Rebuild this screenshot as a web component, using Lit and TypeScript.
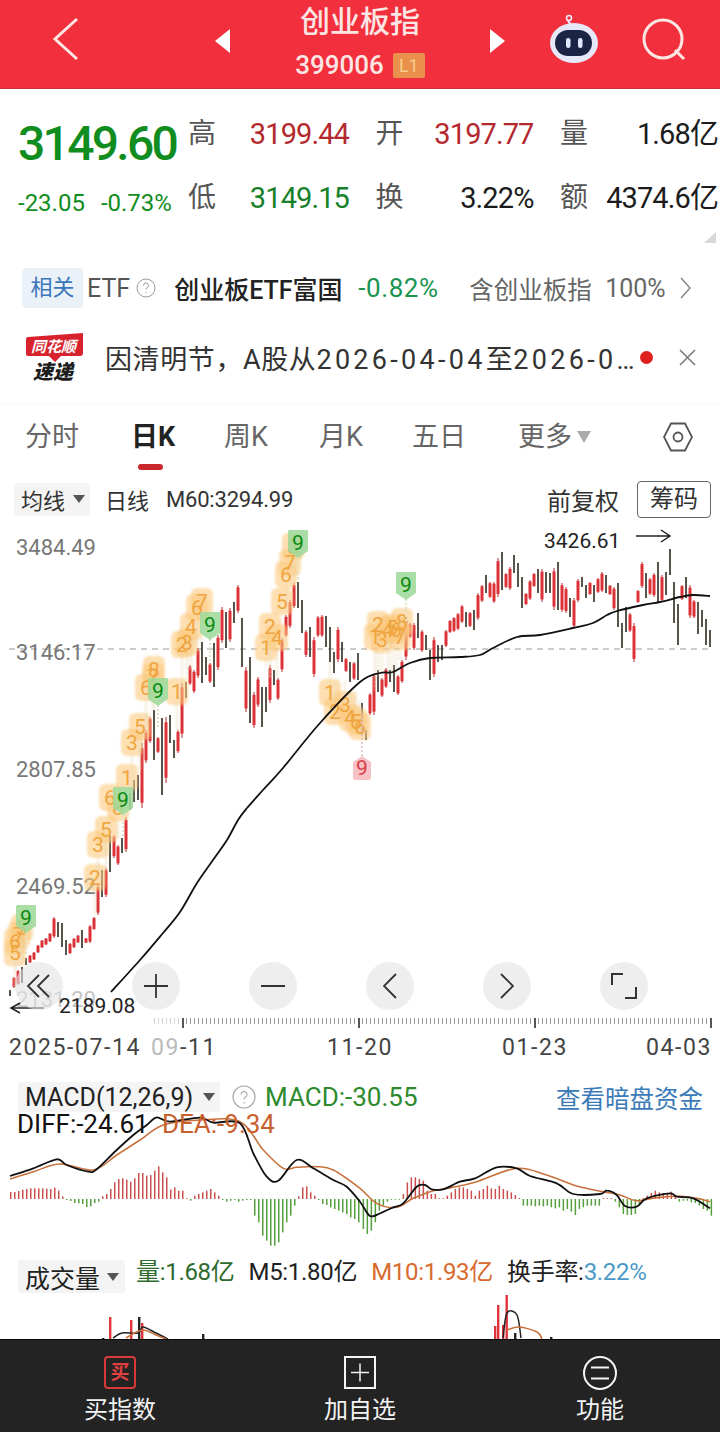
import { LitElement, css, html, svg } from 'lit';
import { customElement } from 'lit/decorators.js';

type Candle = [number, number, 0 | 1];

// top / bottom in page y, one candle every 4px starting at x=10. 1 = red, 0 = dark
const CANDLES: Candle[] = [
  [990,996,0],[977,988,1],[970,985,1],[967,983,0],[958,965,0],[955,963,1],[952,960,1],[945,953,1],[940,948,1],[938,945,1],
  [933,942,1],[917,938,1],[922,937,0],[923,947,0],[940,955,0],[943,954,1],[938,948,1],[935,943,1],[930,948,0],[938,943,1],
  [925,943,1],[917,930,1],[885,915,1],[870,897,0],[868,897,1],[835,872,0],[835,858,1],[845,865,1],[838,853,0],[817,852,1],
  [793,810,0],[780,802,0],[775,800,0],[743,808,1],[730,763,1],[717,743,1],[710,760,0],[737,753,1],[718,795,0],[717,783,1],
  [715,743,0],[740,758,0],[730,753,1],[683,738,1],[682,698,0],[665,685,1],[670,693,1],[648,678,1],[642,683,0],[657,675,0],
  [663,683,1],[643,687,0],[635,670,1],[607,643,1],[612,648,0],[608,642,1],[602,623,0],[585,613,1],[618,667,0],[667,712,1],
  [657,723,0],[692,728,1],[677,707,1],[687,727,0],[687,712,0],[665,703,1],[670,685,0],[678,700,1],[638,672,1],[615,637,1],
  [600,628,1],[583,608,1],[582,608,0],[600,633,0],[630,657,1],[627,657,0],[637,677,1],[616,637,1],[615,637,1],[616,647,0],
  [627,662,0],[652,673,0],[627,662,1],[642,662,0],[658,672,1],[662,682,0],[662,680,1],[653,680,0],[703,735,0],[730,740,0],
  [693,715,1],[673,715,1],[670,692,0],[678,697,1],[668,688,1],[670,682,0],[665,692,0],[675,695,1],[660,683,1],[617,660,1],
  [623,638,1],[623,650,1],[613,638,0],[630,652,1],[635,650,0],[650,680,0],[637,677,1],[645,662,0],[645,660,0],[630,647,1],
  [620,633,1],[617,632,1],[613,630,1],[605,623,1],[612,627,0],[612,627,1],[610,630,0],[593,620,1],[585,602,1],[575,593,0],
  [582,598,1],[582,603,1],[558,597,1],[552,590,0],[573,588,1],[567,590,1],[555,573,0],[563,587,0],[577,608,0],[593,605,1],
  [580,600,1],[573,587,1],[569,593,0],[569,602,1],[572,593,0],[573,593,0],[568,610,1],[562,610,0],[583,612,1],[587,613,1],
  [598,617,0],[598,628,1],[579,602,1],[577,587,0],[585,598,0],[582,595,1],[585,602,0],[578,593,1],[572,592,1],[575,593,0],
  [585,595,1],[587,610,1],[583,627,0],[623,648,0],[607,632,0],[613,632,1],[623,662,1],[590,603,1],[562,588,1],[573,598,0],
  [578,595,1],[573,597,1],[562,602,0],[575,602,1],[572,595,0],[549,575,0],[582,623,0],[604,645,0],[585,600,1],[577,598,0],
  [585,618,1],[600,618,1],[602,634,0],[610,627,0],[619,645,0],[630,647,0],
];

const MA60 = [[111,992],[140,960],[163,933],[180,912],[197,883],[213,860],[227,840],[238,820],[247,808],[263,790],[283,768],[320,723],[360,682],[380,673],[393,672],[410,663],[430,658],[460,657],[480,655],[493,648],[517,637],[540,635],[573,628],[593,623],[607,615],[617,611],[643,605],[660,602],[680,597],[693,595],[710,596]];

// x, y, digit, stem end
const TD_ORANGE: [number, number, string, number][] = [
  [15,953,'5',990],[15,942,'6',975],[19,935,'7',965],[22,928,'3',960],
  [95,878,'2',915],[98,845,'3',880],[106,830,'5',868],
  [110,798,'6',835],[118,808,'8',838],[127,778,'1',815],
  [132,743,'3',800],[140,727,'5',770],
  [146,688,'6',730],[153,677,'7',710],[154,670,'8',710],[177,692,'1',730],
  [182,645,'2',683],[187,643,'3',680],[191,627,'4',670],[197,608,'6',648],[202,602,'7',642],
  [266,648,'1',665],[270,627,'2',677],[277,638,'4',678],[282,602,'5',615],[286,575,'6',600],[290,563,'7',583],[293,547,'8',582],
  [330,693,'1',662],[335,712,'2',680],[345,705,'3',680],[350,718,'4',690],[356,722,'5',690],[360,727,'6',700],
  [375,637,'1',690],[378,625,'2',675],[382,640,'3',680],[388,630,'4',672],[392,628,'5',670],[396,630,'6',675],[400,637,'7',660],[402,622,'8',617],
];
const TD_GREEN: [number, number][] = [[26,918],[123,800],[158,691],[210,625],[298,543],[406,585]];

// traced from the reference at 3x, so they go through zoomed()
const DIFF_LEFT = [[30,318],[100,295],[170,268],[200,285],[265,305],[290,298],[350,240],[400,195],[440,165],[470,142],[510,155],[600,143],[640,158],[720,160],[760,250],[800,320],[835,332],[890,270],[940,295],[1000,330],[1040,350],[1080,395]];
const DIFF_RIGHT = [[30,438],[60,430],[100,412],[130,400],[170,350],[195,345],[215,358],[250,358],[300,335],[345,325],[410,292],[470,295],[510,318],[590,340],[640,372],[720,372],[740,362],[770,375],[795,408],[830,410],[860,385],[930,370],[950,380],[1000,385],[1050,415]];
const DEA_LEFT = [[30,327],[100,305],[180,282],[280,300],[350,255],[420,210],[490,165],[600,150],[720,155],[790,240],[850,295],[890,292],[950,290],[1000,300],[1080,355]];
const DEA_RIGHT = [[50,400],[110,412],[160,385],[220,362],[280,352],[350,335],[470,295],[560,315],[650,348],[730,365],[780,375],[830,392],[880,385],[950,378],[1010,385],[1050,395]];

const HIST_LEFT = [21,21,24,28,30,32,32,32,32,31,30,34,25,8,-3,-6,-12,-13,-15,-24,-22,-12,-8,8,15,30,50,60,62,58,52,62,78,78,70,72,85,98,80,65,28,35,25,25,2,-5,10,15,20,25,30,20,10,-3,-8,-5,-2,-8,-5,-3,-3,-50,-70,-110,-125,-140,-140,-130,-100,-70,-50,-20,8,35,38,20,10,-3,-15,-18,-25,-30,-35,-40,-45,-55,-60,-70];
const HIST_RIGHT = [-90,-105,-95,-70,-35,-20,-8,-2,0,0,15,50,65,65,60,55,25,15,15,2,2,10,20,30,35,35,30,25,10,25,30,40,32,30,40,30,25,20,12,3,-20,-20,-20,-22,-20,-22,-20,-25,-28,-25,-35,-30,-38,-48,-30,-25,-20,-20,-20,-20,2,2,1,-8,-25,-45,-48,-48,-45,-20,3,10,18,25,20,18,18,22,10,-8,-5,-5,-10,-12,-20,-30,-35,-50];

const zoomed = (ox: number, oy: number, pts: number[][]) =>
  pts.map(([x, y]) => [ox + x / 3, oy + y / 3]);

// catmull-rom through the traced points so the lines don't look polygonal
function smooth(pts: number[][]) {
  let d = `M${pts[0][0]} ${pts[0][1]}`;
  for (let i = 0; i < pts.length - 1; i++) {
    const p0 = pts[i - 1] ?? pts[i];
    const p1 = pts[i];
    const p2 = pts[i + 1];
    const p3 = pts[i + 2] ?? p2;
    const c1x = p1[0] + (p2[0] - p0[0]) / 6;
    const c1y = p1[1] + (p2[1] - p0[1]) / 6;
    const c2x = p2[0] - (p3[0] - p1[0]) / 6;
    const c2y = p2[1] - (p3[1] - p1[1]) / 6;
    d += `C${c1x.toFixed(1)} ${c1y.toFixed(1)} ${c2x.toFixed(1)} ${c2y.toFixed(1)} ${p2[0].toFixed(1)} ${p2[1].toFixed(1)}`;
  }
  return d;
}

@customElement('app-root')
export class AppRoot extends LitElement {
  static styles = css`
    :host {
      display: block;
      width: 720px;
      height: 1432px;
      overflow: hidden;
      background: #fff;
      font-family: Roboto, 'Noto Sans CJK SC', sans-serif;
      color: #222;
    }

    .header {
      height: 88px;
      border-bottom: 1px solid #c9323b;
      background: #f22f3d;
      position: relative;
      display: flex;
      justify-content: center;
    }
    .header-icons {
      position: absolute;
      inset: 0;
    }
    .title {
      display: flex;
      flex-direction: column;
      align-items: center;
      color: #fbe6e4;
      padding-top: 1px;
    }
    .title-name {
      font-size: 30px;
      line-height: 42px;
      font-weight: 500;
    }
    .title-code {
      display: flex;
      align-items: center;
      gap: 9px;
      font-size: 26px;
      line-height: 38px;
      font-weight: 500;
      margin-top: 3px;
    }
    .badge {
      width: 32px;
      height: 25px;
      border-radius: 2px;
      background: #e8904c;
      color: #f9cd8a;
      font-size: 18px;
      line-height: 25px;
      text-align: center;
      font-weight: 400;
    }

    .quote {
      height: 175px;
      position: relative;
      display: flex;
      box-sizing: border-box;
      padding-top: 30px;
    }
    .price {
      width: 188px;
      box-sizing: border-box;
      padding-left: 18px;
      color: #118c1e;
    }
    .price-now {
      font-size: 48px;
      line-height: 50px;
      font-weight: 500;
      letter-spacing: -2.7px;
    }
    .price-change {
      display: flex;
      gap: 16px;
      margin-top: 19px;
      font-size: 24px;
      line-height: 30px;
    }
    .stats {
      display: grid;
      grid-template-columns: 161px 158px 158px;
      column-gap: 26.5px;
      grid-auto-rows: 32px;
      row-gap: 32px;
      margin-top: -1px;
    }
    .stat {
      display: flex;
      justify-content: space-between;
      align-items: center;
      font-size: 29px;
      line-height: 32px;
      letter-spacing: -0.9px;
      color: #1c1c1c;
    }
    .stat-label {
      font-size: 28px;
      color: #555;
      letter-spacing: 0;
    }
    .up {
      color: #b3282d;
    }
    .down {
      color: #17812a;
    }
    .corner {
      position: absolute;
      right: 4px;
      bottom: 21px;
      width: 12px;
      height: 11px;
      background: #d8d8d8;
      clip-path: polygon(100% 0, 100% 100%, 0 100%);
    }

    .etf {
      height: 48px;
      display: flex;
      align-items: center;
      font-size: 24.5px;
      padding-left: 22px;
    }
    .etf-chip {
      width: 61px;
      height: 40px;
      line-height: 40px;
      text-align: center;
      background: #eaf1f9;
      color: #3b76b8;
      border-radius: 4px;
      font-size: 22px;
    }
    .etf-label {
      color: #555;
      margin-left: 4px;
      font-size: 25px;
    }
    .etf-help {
      width: 20px;
      height: 20px;
      margin-left: 6px;
    }
    .etf-name {
      margin-left: 18px;
      color: #222;
      white-space: nowrap;
      font-weight: 500;
      font-size: 25px;
      width: 184px;
    }
    .etf-pct {
      color: #1a9450;
      width: 111px;
      font-size: 26px;
      letter-spacing: 0.6px;
    }
    .etf-share {
      color: #666;
      white-space: nowrap;
      width: 136px;
    }
    .etf-full {
      color: #666;
      width: 75px;
      font-size: 25px;
    }

    .news {
      height: 92px;
      display: flex;
      align-items: center;
      padding-left: 25px;
      border-bottom: 1px solid #fafafa;
      box-sizing: border-box;
    }
    .news-logo {
      width: 60px;
      height: 50px;
    }
    .news-text {
      width: 534px;
      margin-left: 20px;
      font-size: 27px;
      color: #333;
      white-space: nowrap;
      overflow: hidden;
      text-overflow: ellipsis;
      letter-spacing: 0.6px;
    }
    .news-text .wide {
      letter-spacing: 3.3px;
    }
    .news-dot {
      width: 13px;
      height: 13px;
      border-radius: 50%;
      background: #e0201e;
      margin-left: 1px;
    }
    .news-close {
      width: 17px;
      height: 17px;
      margin-left: 26px;
    }

    .tabs {
      height: 66px;
      display: grid;
      grid-template-columns: 106px 93px 95px 93px 106px 145px 30px;
      padding-left: 25px;
      font-size: 27px;
      align-items: center;
      color: #666;
    }
    .tab {
      position: relative;
      height: 66px;
      line-height: 66px;
      white-space: nowrap;
    }
    .tab.active {
      color: #222;
      font-weight: 700;
    }
    .tab.active::after {
      content: '';
      position: absolute;
      left: 7px;
      bottom: 0;
      width: 25px;
      height: 6px;
      border-radius: 3px;
      background: #c8282d;
    }
    .tab-more {
      display: flex;
      align-items: center;
      gap: 5px;
    }
    .caret {
      width: 0;
      height: 0;
      border-left: 7px solid transparent;
      border-right: 7px solid transparent;
      border-top: 12px solid #aaa;
    }
    .caret.small {
      border-left-width: 6px;
      border-right-width: 6px;
      border-top: 8px solid #555;
    }
    .tab-hex {
      width: 30px;
      height: 30px;
    }

    .toolbar {
      height: 58px;
      display: flex;
      align-items: center;
      padding: 0 9px 0 14px;
      color: #333;
      font-size: 22px;
    }
    .chip {
      display: flex;
      align-items: center;
      background: #f4f4f4;
      border-radius: 3px;
    }
    .toolbar .chip {
      width: 76px;
      height: 33px;
      box-sizing: border-box;
      padding-left: 7px;
      gap: 8px;
    }
    .toolbar-ma {
      margin-left: 15px;
      white-space: nowrap;
    }
    .toolbar-m60 {
      margin-left: 17px;
      letter-spacing: -0.2px;
    }
    .toolbar-right {
      margin-left: auto;
      display: flex;
      align-items: center;
      gap: 18px;
      font-size: 24px;
    }
    .chips-btn {
      width: 72px;
      height: 35px;
      line-height: 35px;
      text-align: center;
      border: 1px solid #666;
      border-radius: 4px;
    }

    .chart {
      position: relative;
      height: 506px;
    }
    .chart svg {
      display: block;
    }
    .axis {
      font-size: 22px;
      fill: #777;
    }
    .axis.faded {
      fill: #c4c4c4;
    }
    .extreme {
      font-size: 21px;
      fill: #222;
    }
    .td-blobs {
      filter: blur(1px);
    }
    .td {
      font-size: 21px;
      text-anchor: middle;
    }
    .controls {
      position: absolute;
      left: 15px;
      top: 434px;
      display: flex;
      gap: 69px;
    }
    .control {
      width: 48px;
      height: 48px;
      border-radius: 50%;
      background: rgba(226, 226, 226, 0.6);
      display: flex;
      align-items: center;
      justify-content: center;
    }

    .dates {
      height: 24px;
      box-sizing: border-box;
      padding: 2px 0 0 9px;
      display: grid;
      grid-template-columns: 142px 176px 175px 144px auto;
      font-size: 23px;
      line-height: 24px;
      letter-spacing: 1.6px;
      color: #444;
    }
    .dates .faint {
      color: #bbb;
    }

    .macd {
      height: 198px;
      box-sizing: border-box;
      padding-top: 24px;
    }
    .panel-head {
      display: flex;
      align-items: center;
      height: 30px;
      font-size: 25px;
      padding-left: 18px;
      margin-bottom: -6px;
    }
    .panel-head .chip {
      height: 30px;
      width: 202px;
      box-sizing: border-box;
      padding-left: 7px;
      gap: 10px;
      white-space: nowrap;
    }
    .macd-help {
      width: 24px;
      height: 24px;
      margin-left: 12px;
    }
    .macd-value {
      margin-left: 9px;
      color: #2d8a2d;
      font-size: 26px;
      white-space: nowrap;
    }
    .macd-link {
      margin-left: auto;
      margin-right: 17px;
      color: #3a7ab8;
      font-size: 24.5px;
    }
    .legend {
      font-size: 26px;
    }

    .volume {
      height: 83px;
      position: relative;
      overflow: hidden;
    }
    .volume-head {
      position: relative;
      display: flex;
      align-items: flex-start;
      padding: 4px 0 0 18px;
      font-size: 24px;
      height: 33px;
    }
    .volume-head .chip {
      width: 107px;
      height: 33px;
      box-sizing: border-box;
      padding-left: 7px;
      gap: 7px;
      font-size: 25px;
      flex: none;
    }
    .volume-stats {
      display: flex;
      gap: 14px;
      margin: -4px 0 0 11px;
      white-space: nowrap;
      letter-spacing: -0.3px;
      line-height: 32px;
    }
    .vol-now {
      color: #2d6a2d;
    }
    .vol-m10 {
      color: #d86a2e;
    }
    .vol-rate {
      color: #4a9ac8;
    }
    .volume svg {
      position: absolute;
      left: 0;
      top: 0;
    }

    .actions {
      height: 93px;
      background: #232323;
      border-top: 1px solid #0a0a0a;
      box-sizing: border-box;
      display: grid;
      grid-template-columns: repeat(3, 240px);
      color: #f4f4f4;
    }
    .action {
      display: flex;
      flex-direction: column;
      align-items: center;
      padding-top: 15px;
      font-size: 24px;
      gap: 2px;
      line-height: 34px;
    }
    .action svg {
      width: 36px;
      height: 36px;
      display: block;
    }
    .buy-icon {
      font-size: 19px;
      font-weight: 700;
      fill: #e04040;
      text-anchor: middle;
    }
  `;

  private renderCandles() {
    return CANDLES.map(([top, bottom, up], i) => {
      const x = 10 + i * 4;
      if (!up) {
        return svg`<rect x=${x - 0.8} y=${top} width="1.600" height=${bottom - top} fill="#2e2b1e" />`;
      }
      const inset = (bottom - top) * 0.08;
      return svg`
        <rect x=${x - 0.5} y=${top} width="1" height=${bottom - top} fill="#b02a2d" />
        <rect x=${x - 1.5} y=${top + inset} width="3" height=${bottom - top - inset * 2} fill="#dc3237" />
      `;
    });
  }

  private renderMarkers() {
    return svg`
      <g class="td-blobs">
        ${TD_ORANGE.map(
          ([x, y, , end]) => svg`
            <line x1=${x} y1=${y + 12} x2=${x} y2=${end} stroke="#e6d9b8" stroke-width="2" stroke-dasharray="2 2" />
            <rect x=${x - 11} y=${y - 14} width="22" height="27" rx="6" fill="#fbc97e" fill-opacity="0.6" />
          `,
        )}
      </g>
      ${TD_ORANGE.map(
        ([x, y, digit]) => svg`<text class="td" x=${x} y=${y + 7} fill="#efa540">${digit}</text>`,
      )}
      ${TD_GREEN.map(
        ([x, y]) => svg`
          <line x1=${x} y1=${y + 14} x2=${x} y2=${y + 36} stroke="#dfe6c8" stroke-width="2" stroke-dasharray="2 2" />
          <path d="M${x - 9} ${y - 13}h18a1.500 1.500 0 0 1 1 1v20l-10 7l-10 -7v-20a1.500 1.500 0 0 1 1 -1z" fill="#9fd99b" fill-opacity="0.88" />
          <text class="td" x=${x} y=${y + 7} fill="#0b8a12">9</text>
        `,
      )}
      <line x1="362" y1="718" x2="362" y2="756" stroke="#e0c0b8" stroke-width="1.500" stroke-dasharray="2 2" />
      <path d="M353 762l9 -6l9 6v16a2 2 0 0 1 -2 2h-14a2 2 0 0 1 -2 -2z" fill="#f7c2c6" />
      <text class="td" x="362" y="775" fill="#d8404a">9</text>
    `;
  }

  private renderRuler() {
    const ticks = [];
    for (let x = 154; x <= 710; x += 4) {
      const major = (x - 182) % 176 === 0;
      ticks.push(svg`<rect x=${x} y="1018" width=${major ? 2 : 1} height=${major ? 10 : 6}
        fill=${major ? '#555' : x < 182 ? '#d5d5d5' : '#9a9a9a'} />`);
    }
    return ticks;
  }

  private renderHistogram() {
    const bars = (values: number[], start: number) =>
      values.map((v, i) => {
        const h = Math.max(Math.abs(v) / 3, 0.8);
        const y = v > 0 ? 1199 - h : 1199;
        return svg`<rect x=${start + i * 4} y=${y} width="1.500" height=${h} fill=${v > 0 ? '#c9504f' : '#55a03c'} />`;
      });
    return [bars(HIST_LEFT, 10), bars(HIST_RIGHT, 362.6)];
  }

  render() {
    const diff = [...zoomed(0, 1070, DIFF_LEFT), ...zoomed(360, 1070, DIFF_RIGHT)];
    const dea = [...zoomed(0, 1070, DEA_LEFT), ...zoomed(360, 1070, DEA_RIGHT)];
    return html`
      <div class="header">
        <div class="title">
          <div class="title-name">创业板指</div>
          <div class="title-code">399006<span class="badge">L1</span></div>
        </div>
        <svg class="header-icons" width="720" height="88" viewBox="0 0 720 88">
          <path d="M77 19L55 39L77 59" fill="none" stroke="#fbe6e4" stroke-width="3" />
          <path d="M230 29V53L215 41z" fill="#fff" />
          <path d="M490 29V53L505 41z" fill="#fff" />
          <path d="M571 25c-1 -2 -3 -3 -3 -5" fill="none" stroke="#eef" stroke-width="2" />
          <circle cx="569" cy="18" r="2.500" fill="none" stroke="#eef" stroke-width="1.500" />
          <ellipse cx="574" cy="43" rx="24" ry="20" fill="#e6e8f8" />
          <rect x="555" y="30" width="37" height="26" rx="13" fill="#1c2445" />
          <rect x="566" y="38" width="4.500" height="10" rx="2.200" fill="#dfe6ff" />
          <rect x="578" y="38" width="4.500" height="10" rx="2.200" fill="#dfe6ff" />
          <circle cx="663" cy="39" r="19" fill="none" stroke="#fbe6e4" stroke-width="3" />
          <path d="M675 50L684 59" stroke="#fbe6e4" stroke-width="3" />
        </svg>
      </div>

      <div class="quote">
        <div class="price">
          <div class="price-now">3149.60</div>
          <div class="price-change"><span>-23.05</span><span>-0.73%</span></div>
        </div>
        <div class="stats">
          <div class="stat"><span class="stat-label">高</span><span class="up">3199.44</span></div>
          <div class="stat"><span class="stat-label">开</span><span class="up">3197.77</span></div>
          <div class="stat"><span class="stat-label">量</span><span>1.68亿</span></div>
          <div class="stat"><span class="stat-label">低</span><span class="down">3149.15</span></div>
          <div class="stat"><span class="stat-label">换</span><span>3.22%</span></div>
          <div class="stat"><span class="stat-label">额</span><span>4374.6亿</span></div>
        </div>
        <div class="corner"></div>
      </div>

      <div class="etf">
        <div class="etf-chip">相关</div>
        <span class="etf-label">ETF</span>
        <svg class="etf-help" viewBox="0 0 20 20">
          <circle cx="10" cy="10" r="9" fill="none" stroke="#999" />
          <path d="M7.500 7.500a2.500 2.500 0 1 1 3.500 2.300c-.7 .4 -1 .8 -1 1.700M10 14v1.200" fill="none" stroke="#999" />
        </svg>
        <span class="etf-name">创业板ETF富国</span>
        <span class="etf-pct">-0.82%</span>
        <span class="etf-share">含创业板指</span>
        <span class="etf-full">100%</span>
        <svg width="11" height="22" viewBox="0 0 11 22">
          <path d="M1 1L10 11L1 21" fill="none" stroke="#888" stroke-width="1.500" />
        </svg>
      </div>

      <div class="news">
        <svg class="news-logo" viewBox="0 0 60 50">
          <path d="M3 4L58 0V20Q58 23 55 23H36L30 29L24 23H3Q1 23 1 21V6Q1 4 3 4z" fill="#d8232e" />
          <text x="6" y="19" font-size="15" font-weight="700" font-style="italic" fill="#fff">同花顺</text>
          <text x="8" y="46" font-size="20" font-weight="900" font-style="italic" fill="#1c1c1c">速递</text>
        </svg>
        <div class="news-text">因清明节，A股从<span class="wide">2026-04-04</span>至<span class="wide">2026-04-06</span>休市</div>
        <div class="news-dot"></div>
        <svg class="news-close" viewBox="0 0 17 17">
          <path d="M1 1L16 16M16 1L1 16" stroke="#777" stroke-width="1.500" />
        </svg>
      </div>

      <div class="tabs">
        <div class="tab">分时</div>
        <div class="tab active">日K</div>
        <div class="tab">周K</div>
        <div class="tab">月K</div>
        <div class="tab">五日</div>
        <div class="tab tab-more">更多<span class="caret"></span></div>
        <svg class="tab-hex" viewBox="0 0 30 30">
          <path d="M8 1.500H22L29 15L22 28.500H8L1 15z" fill="none" stroke="#555" stroke-width="1.800" />
          <circle cx="15" cy="15" r="4.500" fill="none" stroke="#555" stroke-width="1.800" />
        </svg>
      </div>

      <div class="toolbar">
        <div class="chip">均线<span class="caret small"></span></div>
        <span class="toolbar-ma">日线</span>
        <span class="toolbar-m60">M60:3294.99</span>
        <div class="toolbar-right">
          <span>前复权</span>
          <div class="chips-btn">筹码</div>
        </div>
      </div>

      <div class="chart">
        <svg width="720" height="506" viewBox="0 528 720 506">
          <line x1="9" y1="649" x2="710" y2="649" stroke="#999" stroke-dasharray="6 5" />
          <text class="axis" x="16" y="555">3484.49</text>
          <text class="axis" x="16" y="660">3146:17</text>
          <text class="axis" x="16" y="777">2807.85</text>
          <text class="axis" x="16" y="894">2469.52</text>
          <text class="axis faded" x="16" y="1007">2131.20</text>
          ${this.renderCandles()}
          ${this.renderMarkers()}
          <path d=${smooth(MA60)} fill="none" stroke="#111" stroke-width="1.800" />
          <text class="extreme" x="544" y="548">3426.61</text>
          <path d="M636 536H670M661 530L670 536L661 542" fill="none" stroke="#222" stroke-width="1.500" />
          <text class="extreme" x="59" y="1013">2189.08</text>
          <path d="M44 1008H11M20 1003L11 1008L20 1013" fill="none" stroke="#222" stroke-width="1.500" />
          ${this.renderRuler()}
        </svg>
        <div class="controls">
          <div class="control">
            <svg width="26" height="24" viewBox="0 0 26 24"><path d="M13 1L2 12L13 23M23 1L12 12L23 23" fill="none" stroke="#333" stroke-width="1.800" /></svg>
          </div>
          <div class="control">
            <svg width="24" height="24" viewBox="0 0 24 24"><path d="M0 12H24M12 0V24" stroke="#333" stroke-width="1.800" /></svg>
          </div>
          <div class="control">
            <svg width="24" height="4" viewBox="0 0 24 4"><path d="M0 2H24" stroke="#333" stroke-width="2" /></svg>
          </div>
          <div class="control">
            <svg width="14" height="26" viewBox="0 0 14 26"><path d="M13 1L1 13L13 25" fill="none" stroke="#333" stroke-width="1.800" /></svg>
          </div>
          <div class="control">
            <svg width="14" height="26" viewBox="0 0 14 26"><path d="M1 1L13 13L1 25" fill="none" stroke="#333" stroke-width="1.800" /></svg>
          </div>
          <div class="control">
            <svg width="26" height="26" viewBox="0 0 26 26"><path d="M12 1H1V12M25 14V25H14" fill="none" stroke="#333" stroke-width="2" /></svg>
          </div>
        </div>
      </div>

      <div class="dates">
        <span>2025-07-14</span>
        <span><span class="faint">09</span>-11</span>
        <span>11-20</span>
        <span>01-23</span>
        <span>04-03</span>
      </div>

      <div class="macd">
        <div class="panel-head">
          <div class="chip">MACD(12,26,9)<span class="caret small"></span></div>
          <svg class="macd-help" viewBox="0 0 24 24">
            <circle cx="12" cy="12" r="11" fill="none" stroke="#aaa" stroke-width="1.200" />
            <path d="M9 9.500a3 3 0 1 1 4.500 2.600c-1 .6 -1.500 1 -1.500 2.400M12 17v1.500" fill="none" stroke="#aaa" stroke-width="1.200" />
          </svg>
          <span class="macd-value">MACD:-30.55</span>
          <span class="macd-link">查看暗盘资金</span>
        </div>
        <svg width="720" height="150" viewBox="0 1106 720 150">
          ${this.renderHistogram()}
          <path d=${smooth(dea)} fill="none" stroke="#c8703c" stroke-width="1.500" />
          <path d=${smooth(diff)} fill="none" stroke="#111" stroke-width="1.800" />
          <text class="legend" x="17" y="1133" fill="#111">DIFF:-24.61</text>
          <text class="legend" x="162" y="1133" fill="#c8602e">DEA:-9.34</text>
        </svg>
      </div>

      <div class="volume">
        <svg width="720" height="83" viewBox="0 1256 720 83">
          ${[[109,1317,'#de343a'],[130,1320,'#de343a'],[102,1338,'#222'],[138,1317,'#222'],[141,1323,'#de343a'],[202,1334,'#222'],[494,1326,'#de343a'],[497,1305,'#de343a'],[502,1325,'#de343a'],[505.5,1295,'#de343a'],[514,1333,'#222'],[550,1337,'#222']].map(
            ([x, y, fill]) => svg`<rect x=${x} y=${y} width="2.400" height=${1340 - (y as number)} fill=${fill} />`,
          )}
          <path d=${smooth([[113,1338],[122,1333],[138,1333],[143,1327],[156,1333],[168,1339]])} fill="none" stroke="#222" stroke-width="1.500" />
          <path d=${smooth([[126,1338],[142,1330],[156,1335],[168,1340]])} fill="none" stroke="#c8703c" stroke-width="1.500" />
          <path d=${smooth([[503,1338],[507,1313],[517,1315],[521,1338]])} fill="none" stroke="#222" stroke-width="1.500" />
          <path d=${smooth([[507,1330],[519,1327],[537,1332],[542,1339]])} fill="none" stroke="#c8703c" stroke-width="1.500" />
        </svg>
        <div class="volume-head">
          <div class="chip">成交量<span class="caret small"></span></div>
          <div class="volume-stats">
            <span class="vol-now">量:1.68亿</span>
            <span>M5:1.80亿</span>
            <span class="vol-m10">M10:1.93亿</span>
            <span>换手率:<span class="vol-rate">3.22%</span></span>
          </div>
        </div>
      </div>

      <div class="actions">
        <div class="action">
          <svg viewBox="0 0 36 36">
            <rect x="3" y="2" width="30" height="31" rx="3" fill="none" stroke="#d83a3a" stroke-width="2" />
            <text class="buy-icon" x="18" y="24">买</text>
          </svg>
          买指数
        </div>
        <div class="action">
          <svg viewBox="0 0 36 36">
            <rect x="3" y="2" width="30" height="31" fill="none" stroke="#f4f4f4" stroke-width="2" />
            <path d="M9 17.500H27M18 8.500V26.500" stroke="#f4f4f4" stroke-width="1.500" />
          </svg>
          加自选
        </div>
        <div class="action">
          <svg viewBox="0 0 36 36">
            <circle cx="18" cy="18" r="16" fill="none" stroke="#f4f4f4" stroke-width="2" />
            <path d="M9 12.500H27M9 23.500H27" stroke="#f4f4f4" stroke-width="2" />
          </svg>
          功能
        </div>
      </div>
    `;
  }
}

declare global {
  interface HTMLElementTagNameMap {
    'app-root': AppRoot;
  }
}
